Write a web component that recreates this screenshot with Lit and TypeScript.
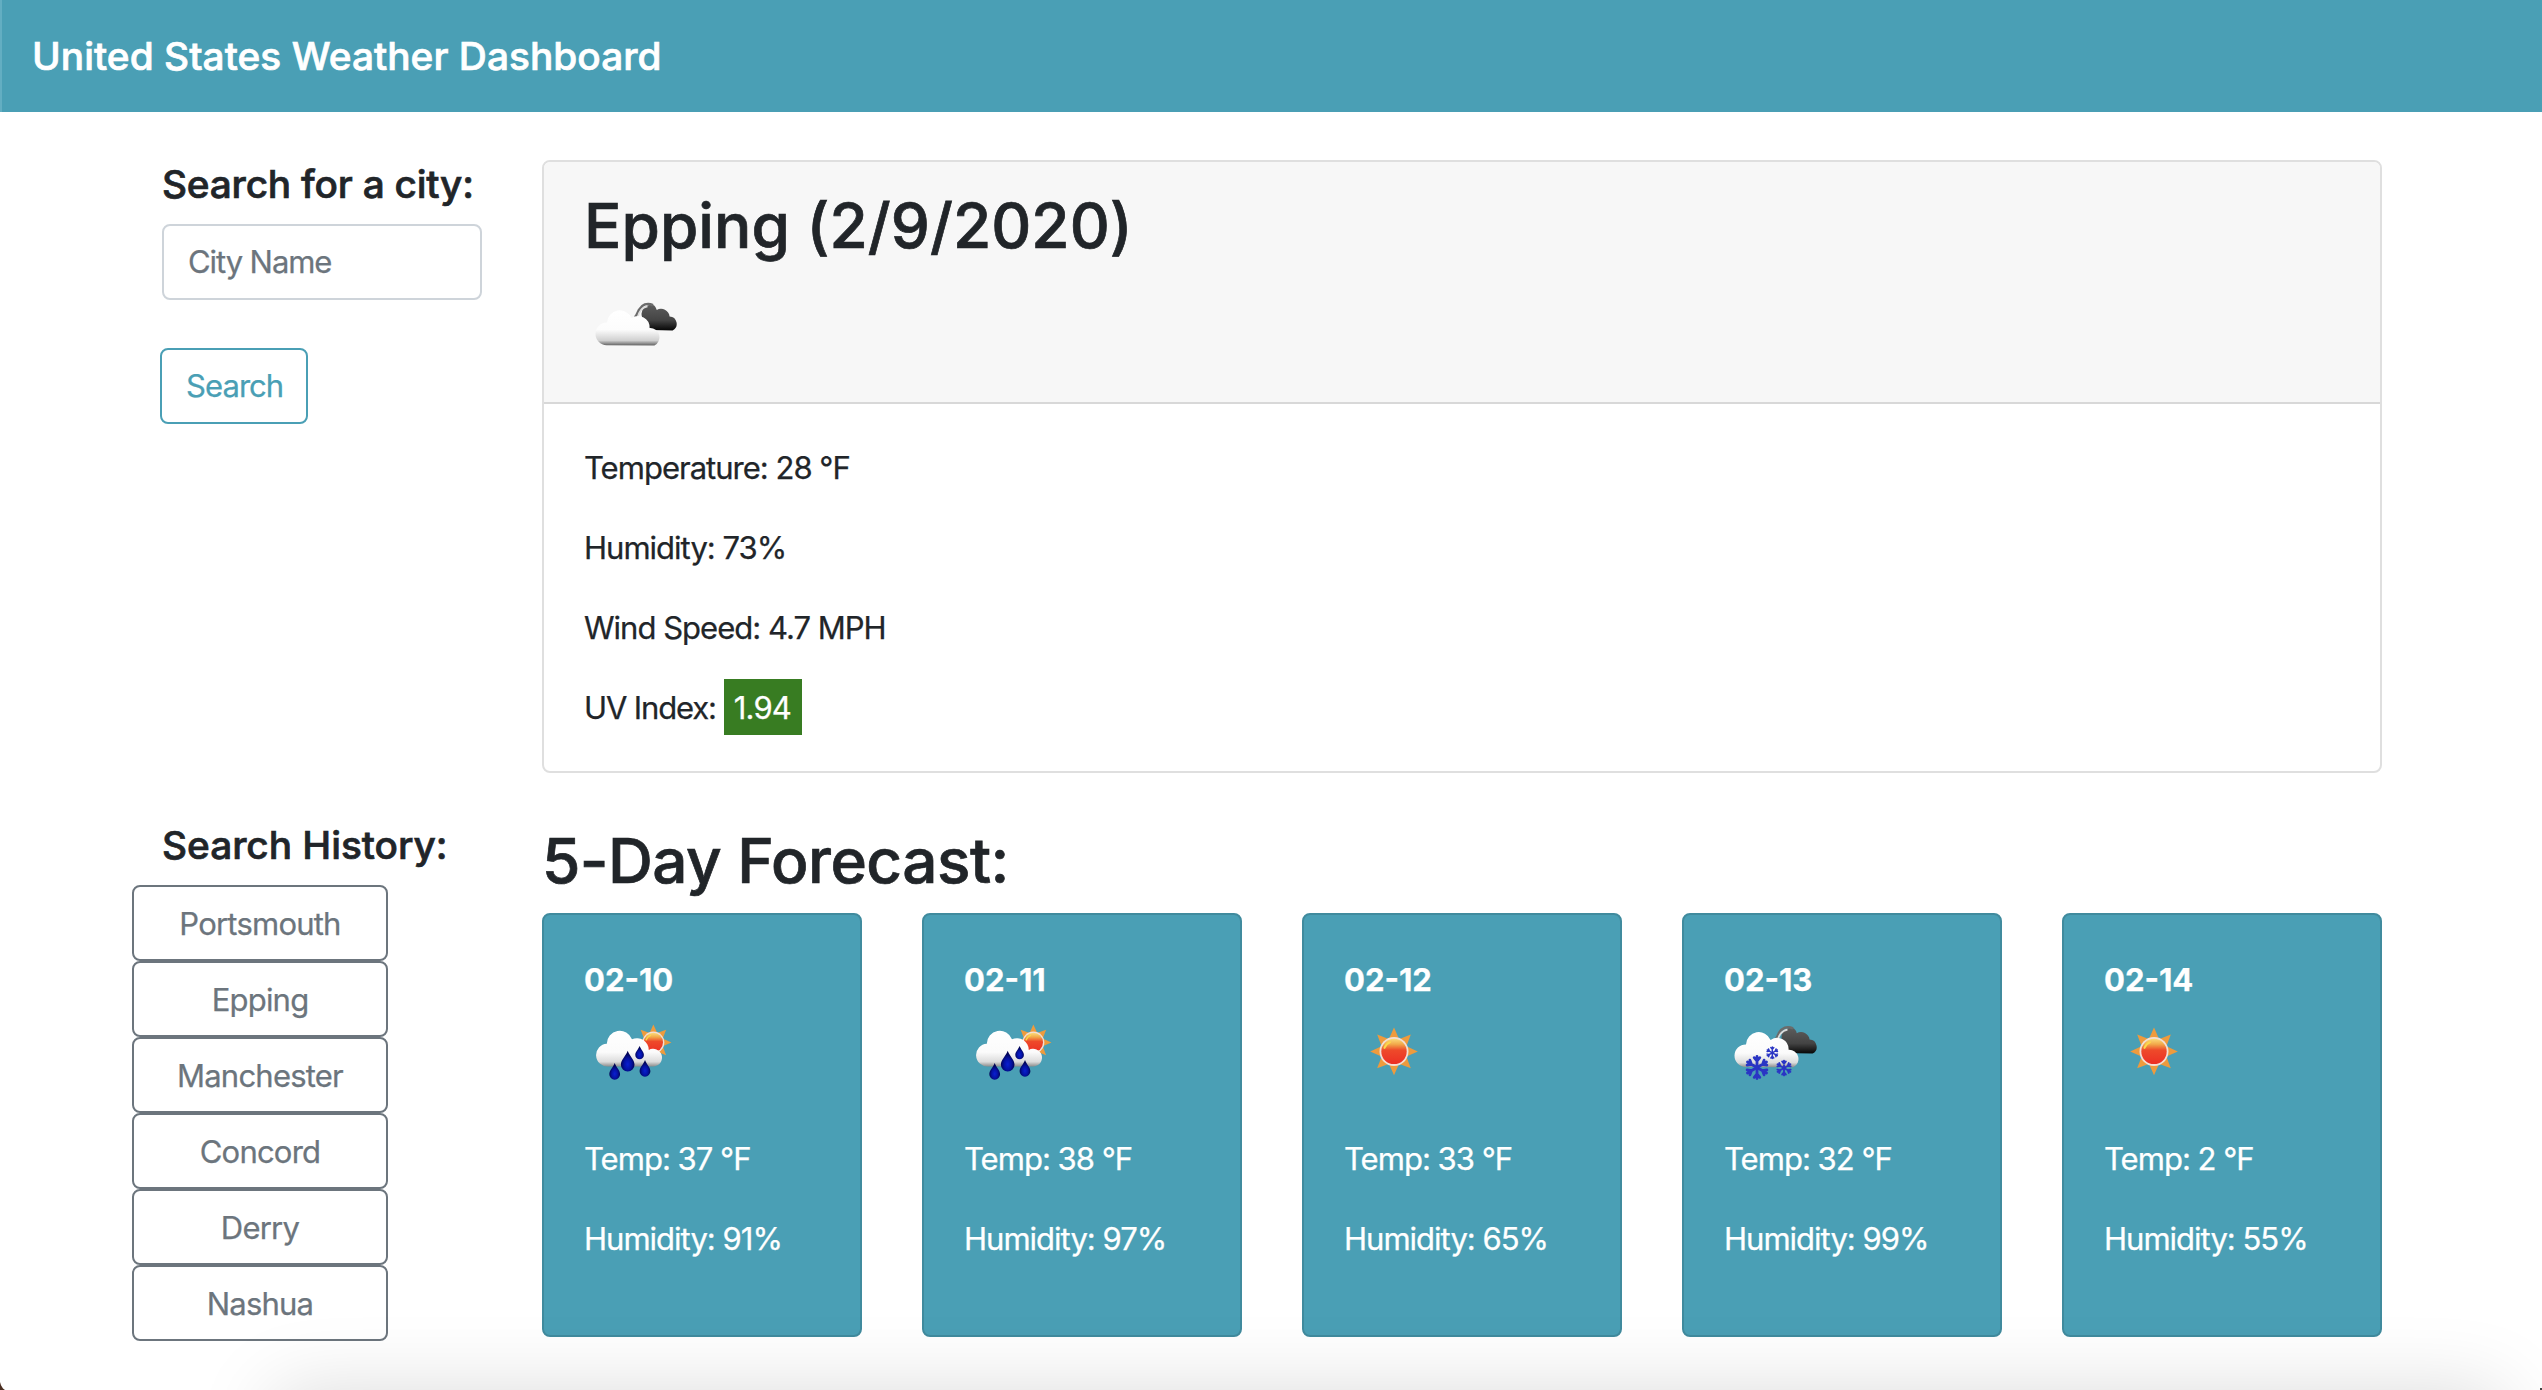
import { LitElement, html, css, svg } from 'lit';
import { customElement, property } from 'lit/decorators.js';

type Sky = 'clouds' | 'rain' | 'sun' | 'snow';

interface Day {
  date: string;
  sky: Sky;
  temp: number;
  humidity: number;
}

const DAYS: Day[] = [
  { date: '02-10', sky: 'rain', temp: 37, humidity: 91 },
  { date: '02-11', sky: 'rain', temp: 38, humidity: 97 },
  { date: '02-12', sky: 'sun', temp: 33, humidity: 65 },
  { date: '02-13', sky: 'snow', temp: 32, humidity: 99 },
  { date: '02-14', sky: 'sun', temp: 2, humidity: 55 },
];

const HISTORY = ['Portsmouth', 'Epping', 'Manchester', 'Concord', 'Derry', 'Nashua'];

/* Eight-pointed sun centred on (cx, cy); R is the ray tip radius. */
const sun = (cx: number, cy: number, R: number) => svg`
  <g transform="translate(${cx} ${cy}) scale(${R / 24})">
    ${[0, 45, 90, 135, 180, 225, 270, 315].map(
      (a) => svg`<path transform="rotate(${a})" d="M-5.6 -11.5L0 -24L5.6 -11.5Z" fill="#ee9b3d"/>`,
    )}
    <circle r="14.6" fill="#f3e0d6"/>
    <circle r="12.8" fill="url(#sunFill)"/>
    <path d="M-9.6 -3.5A10.5 10.5 0 0 1 -4 -9.3" fill="none" stroke="#fbd84a" stroke-width="2" stroke-linecap="round"/>
  </g>`;

const drop = (x: number, top: number, bottom: number, r: number) => svg`
  <path fill="url(#dropFill)" d="M${x} ${top}C${x + r * 0.35} ${top + r * 0.9} ${x + r} ${bottom - r * 1.7} ${x + r} ${bottom - r}
    A${r} ${r} 0 0 1 ${x - r} ${bottom - r}C${x - r} ${bottom - r * 1.7} ${x - r * 0.35} ${top + r * 0.9} ${x} ${top}Z"/>`;

const flake = (x: number, y: number, r: number) => svg`
  <g transform="translate(${x} ${y}) scale(${r / 11})" fill="none" stroke="#2a35c4" stroke-width="2.8" stroke-linecap="round">
    ${[0, 60, 120, 180, 240, 300].map(
      (a) => svg`<path transform="rotate(${a})" d="M0 0V-11M-2.8 -9.8L0 -6.4L2.8 -9.8"/>`,
    )}
  </g>`;

const darkCloud = svg`
  <path fill="url(#darkFill)" d="M58 50V37A9.3 9.3 0 0 1 70 25.5A9.5 9.5 0 0 1 72.8 30.2A8.6 8.6 0 0 1 85.6 36.6
    A7.4 7.4 0 0 1 88.6 50.6Z"/>
  <path d="M50.5 37.5C52.5 37 53 34 55 30C58 25 63 22.6 69 25.4" fill="none" stroke="#6b6b6b" stroke-width="2.6"/>
  <path d="M53.8 37C54.5 33 57.5 27.5 63.5 26.6" fill="none" stroke="#dcdcdc" stroke-width="1.7"/>`;

const whiteCloud = (fill: string) => svg`
  <path fill="url(#${fill})" d="M21.6 64A11.3 11.3 0 0 1 22 41.4A12.8 12.8 0 0 1 46.6 37A11.4 11.4 0 0 1 64.6 46.8
    A9.2 9.2 0 0 1 69.4 64.2Z"/>`;

@customElement('weather-icon')
class WeatherIcon extends LitElement {
  @property() sky: Sky = 'sun';

  static styles = css`
    :host { display: block; width: 100px; height: 100px; }
    .art { display: block; width: 100px; height: 100px; filter: blur(0.6px); }
  `;

  private picture() {
    switch (this.sky) {
      case 'sun':
        return sun(50, 48.4, 23.8);
      case 'clouds':
        return svg`<g transform="translate(0 .8)">${darkCloud}</g>
          <g transform="translate(1 2.2)">${whiteCloud('greyFill')}</g>`;
      case 'snow':
        return svg`${darkCloud}${whiteCloud('whiteFill')}
          ${flake(33, 64.5, 11)}${flake(48.3, 49.8, 5.8)}${flake(60, 65, 7.4)}`;
      default:
        return svg`${sun(69.4, 39.4, 18)}
          <path fill="url(#whiteFill)" d="M24 63.4A11.3 11.3 0 0 1 22.8 40.8A13 13 0 0 1 48 36.2A12 12 0 0 1 64.8 47
            A8.8 8.8 0 1 1 69.7 63.4Z"/>
          ${drop(30.7, 60, 76.7, 5.4)}${drop(61, 57, 73.7, 5.4)}${drop(55.6, 43, 56.2, 4.3)}${drop(43.7, 47.8, 68.5, 6.8)}`;
    }
  }

  render() {
    return html`<svg class="art" viewBox="0 0 100 100" aria-hidden="true">
      <defs>
        <linearGradient id="sunFill" x1="0" y1="0" x2="0" y2="1">
          <stop offset="0" stop-color="#fbdc7a"/><stop offset=".22" stop-color="#f2a94a"/>
          <stop offset=".45" stop-color="#ee4a2a"/><stop offset="1" stop-color="#ec2f24"/>
        </linearGradient>
        <radialGradient id="dropFill" cy=".65">
          <stop offset="0" stop-color="#0a1fd0"/><stop offset=".55" stop-color="#0412a4"/><stop offset="1" stop-color="#020556"/>
        </radialGradient>
        <linearGradient id="darkFill" x1="0" y1="0" x2="0" y2="1">
          <stop offset="0" stop-color="#5c5c5c"/><stop offset=".6" stop-color="#444"/><stop offset="1" stop-color="#060606"/>
        </linearGradient>
        <linearGradient id="whiteFill" x1="0" y1="0" x2="0" y2="1">
          <stop offset="0" stop-color="#fff"/><stop offset=".6" stop-color="#fbfbfb"/>
          <stop offset=".87" stop-color="#dcdcdc"/><stop offset="1" stop-color="#8e8e8e"/>
        </linearGradient>
        <linearGradient id="greyFill" x1="0" y1="0" x2="0" y2="1">
          <stop offset="0" stop-color="#fff"/><stop offset=".55" stop-color="#fcfcfc"/>
          <stop offset=".86" stop-color="#d0d0d0"/><stop offset="1" stop-color="#636363"/>
        </linearGradient>
      </defs>
      ${this.picture()}
    </svg>`;
  }
}

@customElement('app-root')
class AppRoot extends LitElement {
  static styles = css`
    :host {
      display: block;
      position: relative;
      height: 1390px;
      overflow: hidden;
      background: #fff;
      color: #212529;
      font: 400 31.04px/48px Inter, "Liberation Sans", sans-serif;
      letter-spacing: -1px;
      -webkit-text-stroke-width: 0.25px;
    }
    * { box-sizing: border-box; }
    h1, h2, h3, p { margin: 0; font-weight: 500; -webkit-text-stroke-width: 0.7px; }
    .bar {
      height: 112px;
      padding-left: 30px;
      border-left: 2px solid #63aec2;
      background: #4a9fb5;
      color: #fff;
      display: flex;
      align-items: center;
    }
    .brand { font-size: 38.8px; line-height: 60px; letter-spacing: 0.04px; }
    .page { width: 2280px; margin: 48px auto 0; }
    .row { display: grid; grid-template-columns: 380px 1900px; }
    .row + .row { margin-top: 48px; }
    .side { padding: 0 29px 0 31px; }
    .main { padding: 0 29px 0 31px; }
    .label { font-size: 38.8px; line-height: 48px; margin-bottom: 16px; letter-spacing: -0.22px; }
    .label.history { letter-spacing: -0.04px; }
    .input {
      display: block;
      width: 320px;
      height: 76px;
      padding: 0 24px 1px;
      border: 2px solid #ced4da;
      border-radius: 8px;
      background: #fff;
      font: inherit;
      letter-spacing: -1.1px;
      color: #495057;
      -webkit-text-stroke-width: inherit;
    }
    .input::placeholder { color: #6c757d; opacity: 1; }
    .btn {
      display: block;
      height: 76px;
      padding: 1px 24px 0;
      border: 2px solid #6c757d;
      border-radius: 8px;
      background: transparent;
      color: #6c757d;
      font: inherit;
      letter-spacing: -0.8px;
      text-align: center;
      -webkit-text-stroke-width: inherit;
    }
    .go { width: 148px; margin: 48px 0 0 -2px; padding-top: 0; border-color: #4a9fb5; color: #4a9fb5; letter-spacing: -0.95px; }
    .past { display: flex; flex-direction: column; width: 256px; margin-left: -30px; }
    .card { border: 2px solid #dfdfdf; border-radius: 8px; height: 613px; }
    .head { height: 242px; padding: 25px 40px 23px; background: #f7f7f7; border-bottom: 2px solid #d8d8d8; border-radius: 6px 6px 0 0; }
    .title { font-size: 62.08px; line-height: 77px; margin-bottom: 15px; letter-spacing: 0.05px; }
    .facts { padding: 40px; display: flex; flex-direction: column; gap: 32px; }
    .uv { display: flex; align-items: center; gap: 8px; letter-spacing: -1.15px; }
    .badge { width: 78px; height: 56px; margin: -5px 0 -3px; padding: 1px 0 0 10px; line-height: 56px; background: #387c22; color: #fff; letter-spacing: -0.85px; }
    .five { letter-spacing: -0.52px; margin-bottom: 14px; padding-top: 1px; }
    .days { display: grid; grid-template-columns: repeat(5, 320px); gap: 60px; }
    .day {
      height: 424px;
      padding: 41px 40px 39px;
      border: 2px solid #408b9e;
      border-radius: 8px;
      background: #4a9fb5;
      color: #fff;
      display: flex;
      flex-direction: column;
    }
    .date { font-weight: 700; letter-spacing: 0; }
    .day weather-icon { margin-top: -1px; }
    .temp { margin: 32px 0; }
    .glow {
      position: absolute;
      left: 275px;
      right: 40px;
      top: 1392px;
      height: 200px;
      box-shadow: 0 0 80px rgba(0, 0, 0, 0.15);
    }
    .corner { position: absolute; bottom: 0; background: #4b2f22; }
    .corner.left { left: 0; width: 5px; height: 8px; clip-path: polygon(0 0, 20% 40%, 60% 80%, 100% 100%, 0 100%); }
    .corner.right { right: 0; width: 2px; height: 2px; background: #444; }
  `;

  render() {
    return html`
      <header class="bar"><h1 class="brand">United States Weather Dashboard</h1></header>
      <main class="page">
        <section class="row">
          <div class="side">
            <h3 class="label">Search for a city:</h3>
            <input class="input" placeholder="City Name" />
            <button class="btn go">Search</button>
          </div>
          <div class="main">
            <article class="card">
              <div class="head">
                <h2 class="title">Epping (2/9/2020)</h2>
                <weather-icon sky="clouds"></weather-icon>
              </div>
              <div class="facts">
                <div>Temperature: 28 °F</div>
                <div>Humidity: 73%</div>
                <div>Wind Speed: 4.7 MPH</div>
                <div class="uv"><span>UV Index:</span><span class="badge">1.94</span></div>
              </div>
            </article>
          </div>
        </section>
        <section class="row">
          <div class="side">
            <h3 class="label history">Search History:</h3>
            <div class="past">${HISTORY.map((c) => html`<button class="btn">${c}</button>`)}</div>
          </div>
          <div class="main">
            <h2 class="title five">5-Day Forecast:</h2>
            <div class="days">
              ${DAYS.map(
                (d) => html`<article class="day">
                  <div class="date">${d.date}</div>
                  <weather-icon sky=${d.sky}></weather-icon>
                  <div class="temp">Temp: ${d.temp} °F</div>
                  <div>Humidity: ${d.humidity}%</div>
                </article>`,
              )}
            </div>
          </div>
        </section>
      </main>
      <div class="glow"></div>
      <div class="corner left"></div>
      <div class="corner right"></div>
    `;
  }
}
